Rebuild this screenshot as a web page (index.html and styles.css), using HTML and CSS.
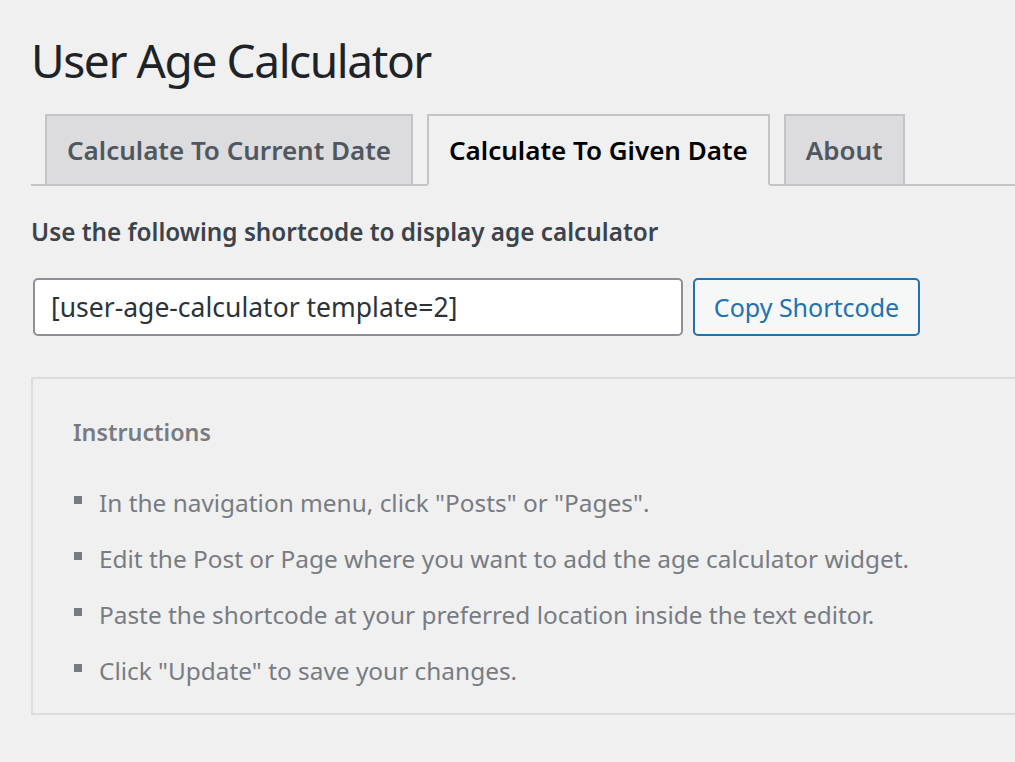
FILE: index.html
```html
<!DOCTYPE html>
<html lang="en">
<head>
<meta charset="utf-8">
<title>User Age Calculator</title>
<link rel="stylesheet" href="styles.css">
</head>
<body>
<div class="wrap">
  <h1 class="page-title">User Age Calculator</h1>
  <nav class="tabs">
    <a class="tab" href="#">Calculate To Current Date</a>
    <a class="tab tab-active" href="#">Calculate To Given Date</a>
    <a class="tab" href="#">About</a>
  </nav>
  <p class="lead">Use the following shortcode to display age calculator</p>
  <div class="shortcode-row">
    <input class="shortcode-input" type="text" value="[user-age-calculator template=2]" readonly>
    <button class="copy-btn" type="button">Copy Shortcode</button>
  </div>
  <div class="box">
    <h2 class="box-title">Instructions</h2>
    <ul class="steps">
      <li>In the navigation menu, click "Posts" or "Pages".</li>
      <li>Edit the Post or Page where you want to add the age calculator widget.</li>
      <li>Paste the shortcode at your preferred location inside the text editor.</li>
      <li>Click "Update" to save your changes.</li>
    </ul>
  </div>
</div>
</body>
</html>
```
FILE: styles.css
```css
html, body {
  margin: 0;
  padding: 0;
  background: #f0f0f1;
}

body {
  font-family: "Noto Sans", "Open Sans", sans-serif;
  color: #3c434a;
  overflow: hidden;
}

.wrap {
  padding-left: 31px;
  overflow: hidden;
}

.page-title {
  margin: 32px 0 0;
  font-size: 46px;
  line-height: 56px;
  font-weight: 400;
  letter-spacing: -1.4px;
  color: #1d2327;
}

.tabs {
  display: flex;
  align-items: flex-end;
  gap: 14px;
  margin-top: 26px;
  padding-left: 14px;
  border-bottom: 2px solid #c3c4c7;
}

.tab {
  display: block;
  height: 68px;
  line-height: 68px;
  padding: 0 20px;
  margin-bottom: -2px;
  border: 2px solid #c3c4c7;
  background: #dcdcde;
  color: #50575e;
  font-size: 26px;
  font-weight: 600;
  text-decoration: none;
  white-space: nowrap;
}

.tab-active {
  background: #f0f0f1;
  color: #000;
  border-bottom-color: #f0f0f1;
}

.lead {
  margin: 28px 0 0;
  font-size: 24.3px;
  line-height: 36px;
  font-weight: 600;
  color: #3c434a;
}

.shortcode-row {
  display: flex;
  gap: 10px;
  margin-top: 28px;
  padding-left: 2px;
}

.shortcode-input {
  box-sizing: border-box;
  width: 650px;
  height: 58px;
  padding: 0 16px;
  border: 2px solid #8c8f94;
  border-radius: 5px;
  background: #fff;
  color: #2c3338;
  font-family: inherit;
  font-size: 26.5px;
  outline: none;
}

.copy-btn {
  box-sizing: border-box;
  width: 227px;
  height: 58px;
  padding: 0;
  border: 2px solid #2271b1;
  border-radius: 5px;
  background: #f6f7f7;
  color: #2271b1;
  font-family: inherit;
  font-size: 25px;
}

.box {
  box-sizing: border-box;
  width: calc(100% + 40px);
  margin-top: 41px;
  padding: 36px 40px 15px;
  border: 2px solid #dcdcde;
}

.box-title {
  margin: 0;
  font-size: 23.3px;
  line-height: 34px;
  font-weight: 600;
  color: #787c82;
}

.steps {
  list-style: none;
  margin: 25px 0 0;
  padding: 0;
}

.steps li {
  display: flex;
  align-items: center;
  gap: 17px;
  height: 56px;
  font-size: 24.4px;
  color: #787c82;
}

.steps li::before {
  content: "";
  flex: none;
  width: 8px;
  height: 8px;
  margin-left: 1px;
  margin-top: -5px;
  background: #787c82;
}
```
